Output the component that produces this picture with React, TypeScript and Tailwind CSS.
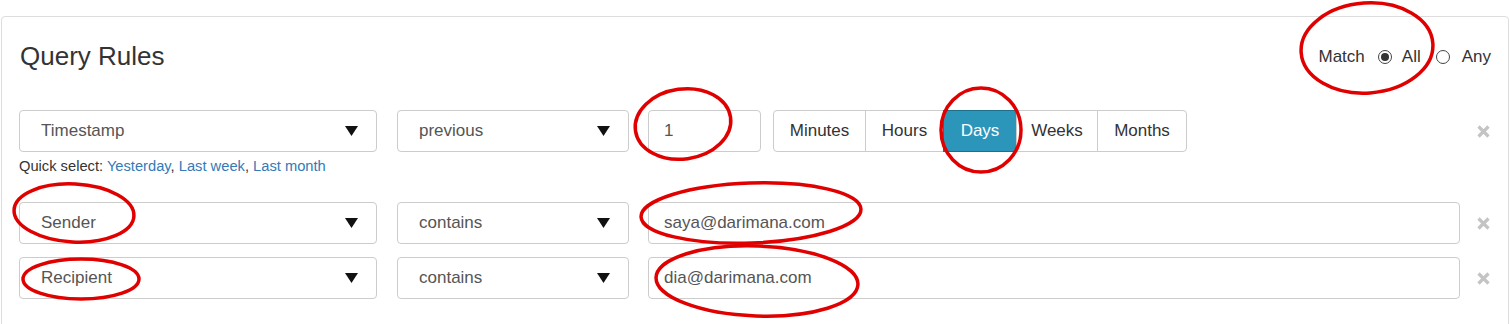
import React from "react";

const font = { fontFamily: '"Liberation Sans", Arial, Helvetica, sans-serif' };

function Arrow() {
  return (
    <svg width="13" height="10" viewBox="0 0 13 10" className="shrink-0">
      <polygon points="0,0 13,0 6.5,10" fill="#111" />
    </svg>
  );
}

function Select({ label, w }: { label: string; w: string }) {
  return (
    <div className={`${w} h-[42px] shrink-0 flex items-center justify-between border border-[#ccc] rounded-[4px] pl-[21px] pr-[18px] text-[17px] text-[#555] bg-white`}>
      <span>{label}</span>
      <Arrow />
    </div>
  );
}

function Close() {
  return (
    <div className="w-[31px] shrink-0 flex items-center justify-end pr-[1px]">
      <svg width="13" height="13" viewBox="0 0 13 13">
        <path d="M1.5 1.5 L11.5 11.5 M11.5 1.5 L1.5 11.5" stroke="#c4c4c4" strokeWidth="3.2" strokeLinecap="butt" />
      </svg>
    </div>
  );
}

function Radio({ checked }: { checked: boolean }) {
  return (
    <span className="w-[14px] h-[14px] rounded-full border border-[#444] bg-white flex items-center justify-center">
      {checked && <span className="w-[8px] h-[8px] rounded-full bg-[#333]" />}
    </span>
  );
}

function Lead({ field, op }: { field: string; op: string }) {
  return (
    <>
      <Select label={field} w="w-[358px]" />
      <div className="w-[20px] shrink-0" />
      <Select label={op} w="w-[232px]" />
      <div className="w-[19px] shrink-0" />
    </>
  );
}

export default function App() {
  const units = [
    { t: "Minutes", w: "w-[93px]" },
    { t: "Hours", w: "w-[79px]" },
    { t: "Days", w: "w-[74px]", active: true },
    { t: "Weeks", w: "w-[82px]" },
    { t: "Months", w: "w-[90px]" },
  ];
  return (
    <div className="relative w-[1510px] h-[324px] overflow-hidden bg-white pt-[16px] pl-px" style={font}>
      <div className="w-[1508px] h-[340px] border border-[#ddd] rounded-[4px] pl-[17px] pr-[17px]">
        <div className="h-[76px] flex items-center justify-between">
          <h3 className="text-[26px] text-[#333] leading-none pt-[1px] pl-[1px]">Query Rules</h3>
          <div className="flex items-center text-[17px] text-[#333] pt-[4px]">
            <span>Match</span>
            <span className="ml-[13px]"><Radio checked /></span>
            <span className="ml-[10px]">All</span>
            <span className="ml-[15px]"><Radio checked={false} /></span>
            <span className="ml-[12px]">Any</span>
          </div>
        </div>

        <div className="mt-[17px]">
          <div className="flex h-[42px]">
            <Lead field="Timestamp" op="previous" />
            <div className="flex-1 flex">
              <div className="w-[113px] h-[42px] border border-[#ccc] rounded-[4px] pl-[15px] flex items-center text-[17px] text-[#555]">1</div>
              <div className="ml-[12px] flex h-[42px]">
                {units.map((u, i) => (
                  <div
                    key={u.t}
                    className={`${u.w} h-[42px] flex items-center justify-center text-[17px] border ${
                      u.active ? "bg-[#2b95ba] border-[#1d6f8c] text-white" : "bg-white border-[#ccc] text-[#333]"
                    } ${i > 0 ? "-ml-px" : ""} ${i === 0 ? "rounded-l-[4px]" : ""} ${i === units.length - 1 ? "rounded-r-[4px]" : ""}`}
                  >
                    {u.t}
                  </div>
                ))}
              </div>
            </div>
            <Close />
          </div>
          <div className="mt-[5px] text-[14.7px] leading-[18px] text-[#333]">
            Quick select: <span className="text-[#337ab7]">Yesterday</span>, <span className="text-[#337ab7]">Last week</span>, <span className="text-[#337ab7]">Last month</span>
          </div>

          <div className="mt-[27px] flex h-[42px]">
            <Lead field="Sender" op="contains" />
            <div className="flex-1 h-[42px] border border-[#ccc] rounded-[4px] pl-[15px] flex items-center text-[17px] text-[#555]">saya@darimana.com</div>
            <Close />
          </div>

          <div className="mt-[13px] flex h-[42px]">
            <Lead field="Recipient" op="contains" />
            <div className="flex-1 h-[42px] border border-[#ccc] rounded-[4px] pl-[15px] flex items-center text-[17px] text-[#555]">dia@darimana.com</div>
            <Close />
          </div>
        </div>
      </div>

      <svg className="absolute left-0 top-0 pointer-events-none" width="1510" height="324" viewBox="0 0 1510 324">
        <g fill="none" stroke="#e00000" strokeWidth="3.5">
          <ellipse cx="1367" cy="48" rx="66" ry="45" transform="rotate(-4 1367 48)" />
          <ellipse cx="683" cy="124" rx="48" ry="35" transform="rotate(-8 683 124)" />
          <ellipse cx="981" cy="130" rx="40" ry="42" />
          <ellipse cx="74" cy="213" rx="60" ry="29" transform="rotate(3 74 213)" />
          <ellipse cx="81" cy="279" rx="58" ry="20" />
          <ellipse cx="751" cy="213" rx="110" ry="30" transform="rotate(-2 751 213)" />
          <ellipse cx="757" cy="281" rx="101" ry="35" transform="rotate(2 757 281)" />
        </g>
      </svg>
    </div>
  );
}
